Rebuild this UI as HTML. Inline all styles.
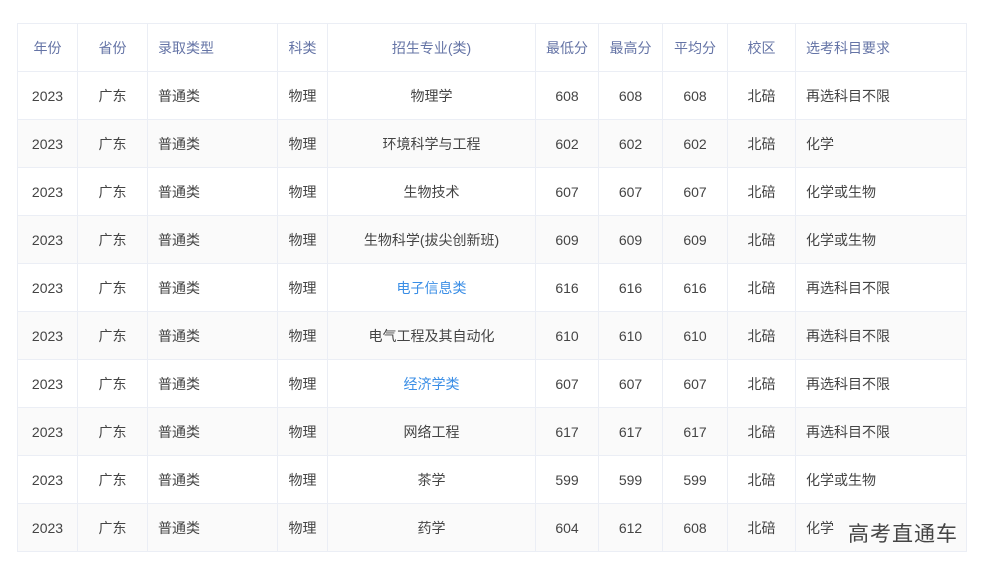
<!DOCTYPE html>
<html><head><meta charset="utf-8"><style>
body{margin:0;background:#fff;width:986px;height:571px;overflow:hidden;font-family:"Liberation Sans","Noto Sans CJK SC",sans-serif;position:relative}
table{position:absolute;left:17px;top:23px;border-collapse:collapse;table-layout:fixed;width:949px}
td,th{border:1px solid #ebeef5;height:47px;font-size:14px;color:#444;padding:0 0 0 10px;text-align:left;font-weight:normal}
th{color:#6574a6}
.c{text-align:center;padding:0}
tr:nth-child(odd) td{background:#fafafa}
a{color:#3a8ee6;text-decoration:none}
.wm{position:absolute;right:28px;top:518px;font-size:21px;color:#444;letter-spacing:1px}
</style></head><body>
<table>
<colgroup><col style="width:60px"><col style="width:70px"><col style="width:130px"><col style="width:50px"><col style="width:208px"><col style="width:63px"><col style="width:64px"><col style="width:65px"><col style="width:68px"><col style="width:171px"></colgroup>
<tr><th class="c">年份</th><th class="c">省份</th><th>录取类型</th><th class="c">科类</th><th class="c">招生专业(类)</th><th class="c">最低分</th><th class="c">最高分</th><th class="c">平均分</th><th class="c">校区</th><th>选考科目要求</th></tr>
<tr><td class="c">2023</td><td class="c">广东</td><td>普通类</td><td class="c">物理</td><td class="c">物理学</td><td class="c">608</td><td class="c">608</td><td class="c">608</td><td class="c">北碚</td><td>再选科目不限</td></tr>
<tr><td class="c">2023</td><td class="c">广东</td><td>普通类</td><td class="c">物理</td><td class="c">环境科学与工程</td><td class="c">602</td><td class="c">602</td><td class="c">602</td><td class="c">北碚</td><td>化学</td></tr>
<tr><td class="c">2023</td><td class="c">广东</td><td>普通类</td><td class="c">物理</td><td class="c">生物技术</td><td class="c">607</td><td class="c">607</td><td class="c">607</td><td class="c">北碚</td><td>化学或生物</td></tr>
<tr><td class="c">2023</td><td class="c">广东</td><td>普通类</td><td class="c">物理</td><td class="c">生物科学(拔尖创新班)</td><td class="c">609</td><td class="c">609</td><td class="c">609</td><td class="c">北碚</td><td>化学或生物</td></tr>
<tr><td class="c">2023</td><td class="c">广东</td><td>普通类</td><td class="c">物理</td><td class="c"><a>电子信息类</a></td><td class="c">616</td><td class="c">616</td><td class="c">616</td><td class="c">北碚</td><td>再选科目不限</td></tr>
<tr><td class="c">2023</td><td class="c">广东</td><td>普通类</td><td class="c">物理</td><td class="c">电气工程及其自动化</td><td class="c">610</td><td class="c">610</td><td class="c">610</td><td class="c">北碚</td><td>再选科目不限</td></tr>
<tr><td class="c">2023</td><td class="c">广东</td><td>普通类</td><td class="c">物理</td><td class="c"><a>经济学类</a></td><td class="c">607</td><td class="c">607</td><td class="c">607</td><td class="c">北碚</td><td>再选科目不限</td></tr>
<tr><td class="c">2023</td><td class="c">广东</td><td>普通类</td><td class="c">物理</td><td class="c">网络工程</td><td class="c">617</td><td class="c">617</td><td class="c">617</td><td class="c">北碚</td><td>再选科目不限</td></tr>
<tr><td class="c">2023</td><td class="c">广东</td><td>普通类</td><td class="c">物理</td><td class="c">茶学</td><td class="c">599</td><td class="c">599</td><td class="c">599</td><td class="c">北碚</td><td>化学或生物</td></tr>
<tr><td class="c">2023</td><td class="c">广东</td><td>普通类</td><td class="c">物理</td><td class="c">药学</td><td class="c">604</td><td class="c">612</td><td class="c">608</td><td class="c">北碚</td><td>化学</td></tr>
</table>
<div class="wm">高考直通车</div>
</body></html>
